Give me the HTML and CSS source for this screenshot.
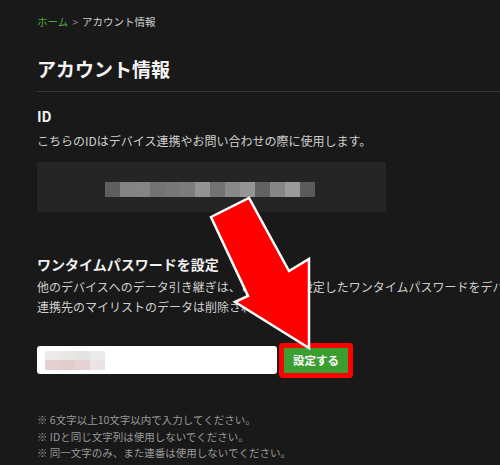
FILE: index.html
```html
<!DOCTYPE html>
<html lang="ja">
<head>
<meta charset="utf-8">
<title>アカウント情報</title>
<link rel="stylesheet" href="styles.css">
</head>
<body>
<div class="page">
  <nav class="crumbs"><span class="crumb-home">ホーム</span><span class="crumb-sep">&gt;</span><span class="crumb-cur">アカウント情報</span></nav>
  <h1 class="title">アカウント情報</h1>
  <hr class="divider">

  <section class="sec-id">
    <h2 class="sec-head">ID</h2>
    <p class="desc">こちらのIDはデバイス連携やお問い合わせの際に使用します。</p>
    <div class="id-box">
      <div class="mosaic">
        <span class="m" style="background:#5f5f5f"></span>
        <span class="m" style="background:#838383"></span>
        <span class="m" style="background:#858585"></span>
        <span class="m" style="background:#737373"></span>
        <span class="m" style="background:#777777"></span>
        <span class="m" style="background:#7c7c7c"></span>
        <span class="m" style="background:#939393"></span>
        <span class="m" style="background:#727272"></span>
        <span class="m" style="background:#898989"></span>
        <span class="m" style="background:#959595"></span>
        <span class="m" style="background:#626262"></span>
        <span class="m" style="background:#868686"></span>
        <span class="m" style="background:#9a9a9a"></span>
        <span class="m" style="background:#5c5a5a"></span>
      </div>
    </div>
  </section>

  <section class="sec-pw">
    <h2 class="sec-head">ワンタイムパスワードを設定</h2>
    <p class="desc lines">他のデバイスへのデータ引き継ぎは、この画面で設定したワンタイムパスワードをデバイス連携画面で入力してください。<br>連携先のマイリストのデータは削除されます。</p>
    <div class="form-row">
      <div class="pw-input">
        <div class="pw-mosaic">
          <div class="pw-row">
            <span class="pm" style="background:#ebe9e9"></span>
            <span class="pm" style="background:#e9e6e6"></span>
            <span class="pm" style="background:#e4e4e2"></span>
            <span class="pm" style="background:#ecebeb"></span>
          </div>
          <div class="pw-row">
            <span class="pm" style="background:#e4d0d0"></span>
            <span class="pm" style="background:#e3cccc"></span>
            <span class="pm" style="background:#e6d2d2"></span>
            <span class="pm" style="background:#ebe4e4"></span>
          </div>
        </div>
      </div>
      <button class="set-btn">設定する</button>
    </div>
  </section>

  <ul class="notes">
    <li>※ 6文字以上10文字以内で入力してください。</li>
    <li>※ IDと同じ文字列は使用しないでください。</li>
    <li>※ 同一文字のみ、また連番は使用しないでください。</li>
    <li>※ ワンタイムパスワードは10分間のみ有効です。</li>
  </ul>
</div>

<svg class="arrow" width="500" height="465" viewBox="0 0 500 465" aria-hidden="true">
  <polygon points="211,217 249,198 289,271 309,259 309,348 235,302 248,296" fill="#ff0000" stroke="#ffffff" stroke-width="2.5" stroke-linejoin="miter"/>
</svg>
</body>
</html>
```

FILE: styles.css
```css
html, body {
  margin: 0;
  padding: 0;
}
body {
  background: #191919;
  width: 500px;
  height: 465px;
  overflow: hidden;
  position: relative;
  font-family: "Noto Sans CJK JP", "Noto Sans", sans-serif;
  color: #d6d6d6;
}
.page {
  padding: 15px 0 0 37px;
  white-space: nowrap;
}
.crumbs {
  font-size: 10.5px;
  line-height: 14px;
  display: flex;
  gap: 4px;
}
.crumb-home { color: #4aa83c; }
.crumb-sep { color: #8a8a8a; }
.crumb-cur { color: #cfcfcf; }
.title {
  margin: 27px 0 0;
  font-size: 19px;
  line-height: 26px;
  font-weight: bold;
  color: #f4f4f4;
}
.divider {
  margin: 9px 0 0;
  border: 0;
  border-top: 1px solid #363636;
  height: 0;
}
.sec-head {
  margin: 0;
  font-size: 14px;
  line-height: 20px;
  font-weight: bold;
  color: #f0f0f0;
}
.sec-id { margin-top: 14px; }
.sec-id .desc { margin: 6px 0 0; }
.desc {
  font-size: 12px;
  line-height: 18px;
  color: #cfcfcf;
}
.id-box {
  margin-top: 12px;
  width: 349px;
  height: 50px;
  background: #252525;
  display: flex;
  align-items: center;
}
.mosaic {
  display: flex;
  margin-left: 68px;
  margin-top: 4px;
}
.m {
  width: 15px;
  height: 15px;
}
.sec-pw { margin-top: 42px; }
.sec-pw .desc.lines {
  margin: 3px 0 0;
  line-height: 20px;
}
.form-row {
  margin-top: 29px;
  display: flex;
  align-items: center;
}
.pw-input {
  width: 240px;
  height: 28px;
  background: #ffffff;
  border-radius: 3px;
  display: flex;
  align-items: center;
}
.pw-mosaic {
  margin-left: 8px;
  display: flex;
  flex-direction: column;
}
.pw-row { display: flex; }
.pm {
  width: 15px;
  height: 9.5px;
}
.set-btn {
  margin-left: 7px;
  width: 64px;
  height: 25px;
  border: 0;
  border-radius: 1px;
  background: #3a9e30;
  color: #ffffff;
  font-family: "Noto Sans CJK JP", sans-serif;
  font-size: 11.5px;
  font-weight: bold;
  padding: 0;
  box-shadow: 0 0 0 5px #ff0000;
}
.notes {
  list-style: none;
  margin: 38px 0 0;
  padding: 0;
  font-size: 10.5px;
  line-height: 16.5px;
  color: #9a9a9a;
}
.arrow {
  position: absolute;
  left: 0;
  top: 0;
  pointer-events: none;
}
```
